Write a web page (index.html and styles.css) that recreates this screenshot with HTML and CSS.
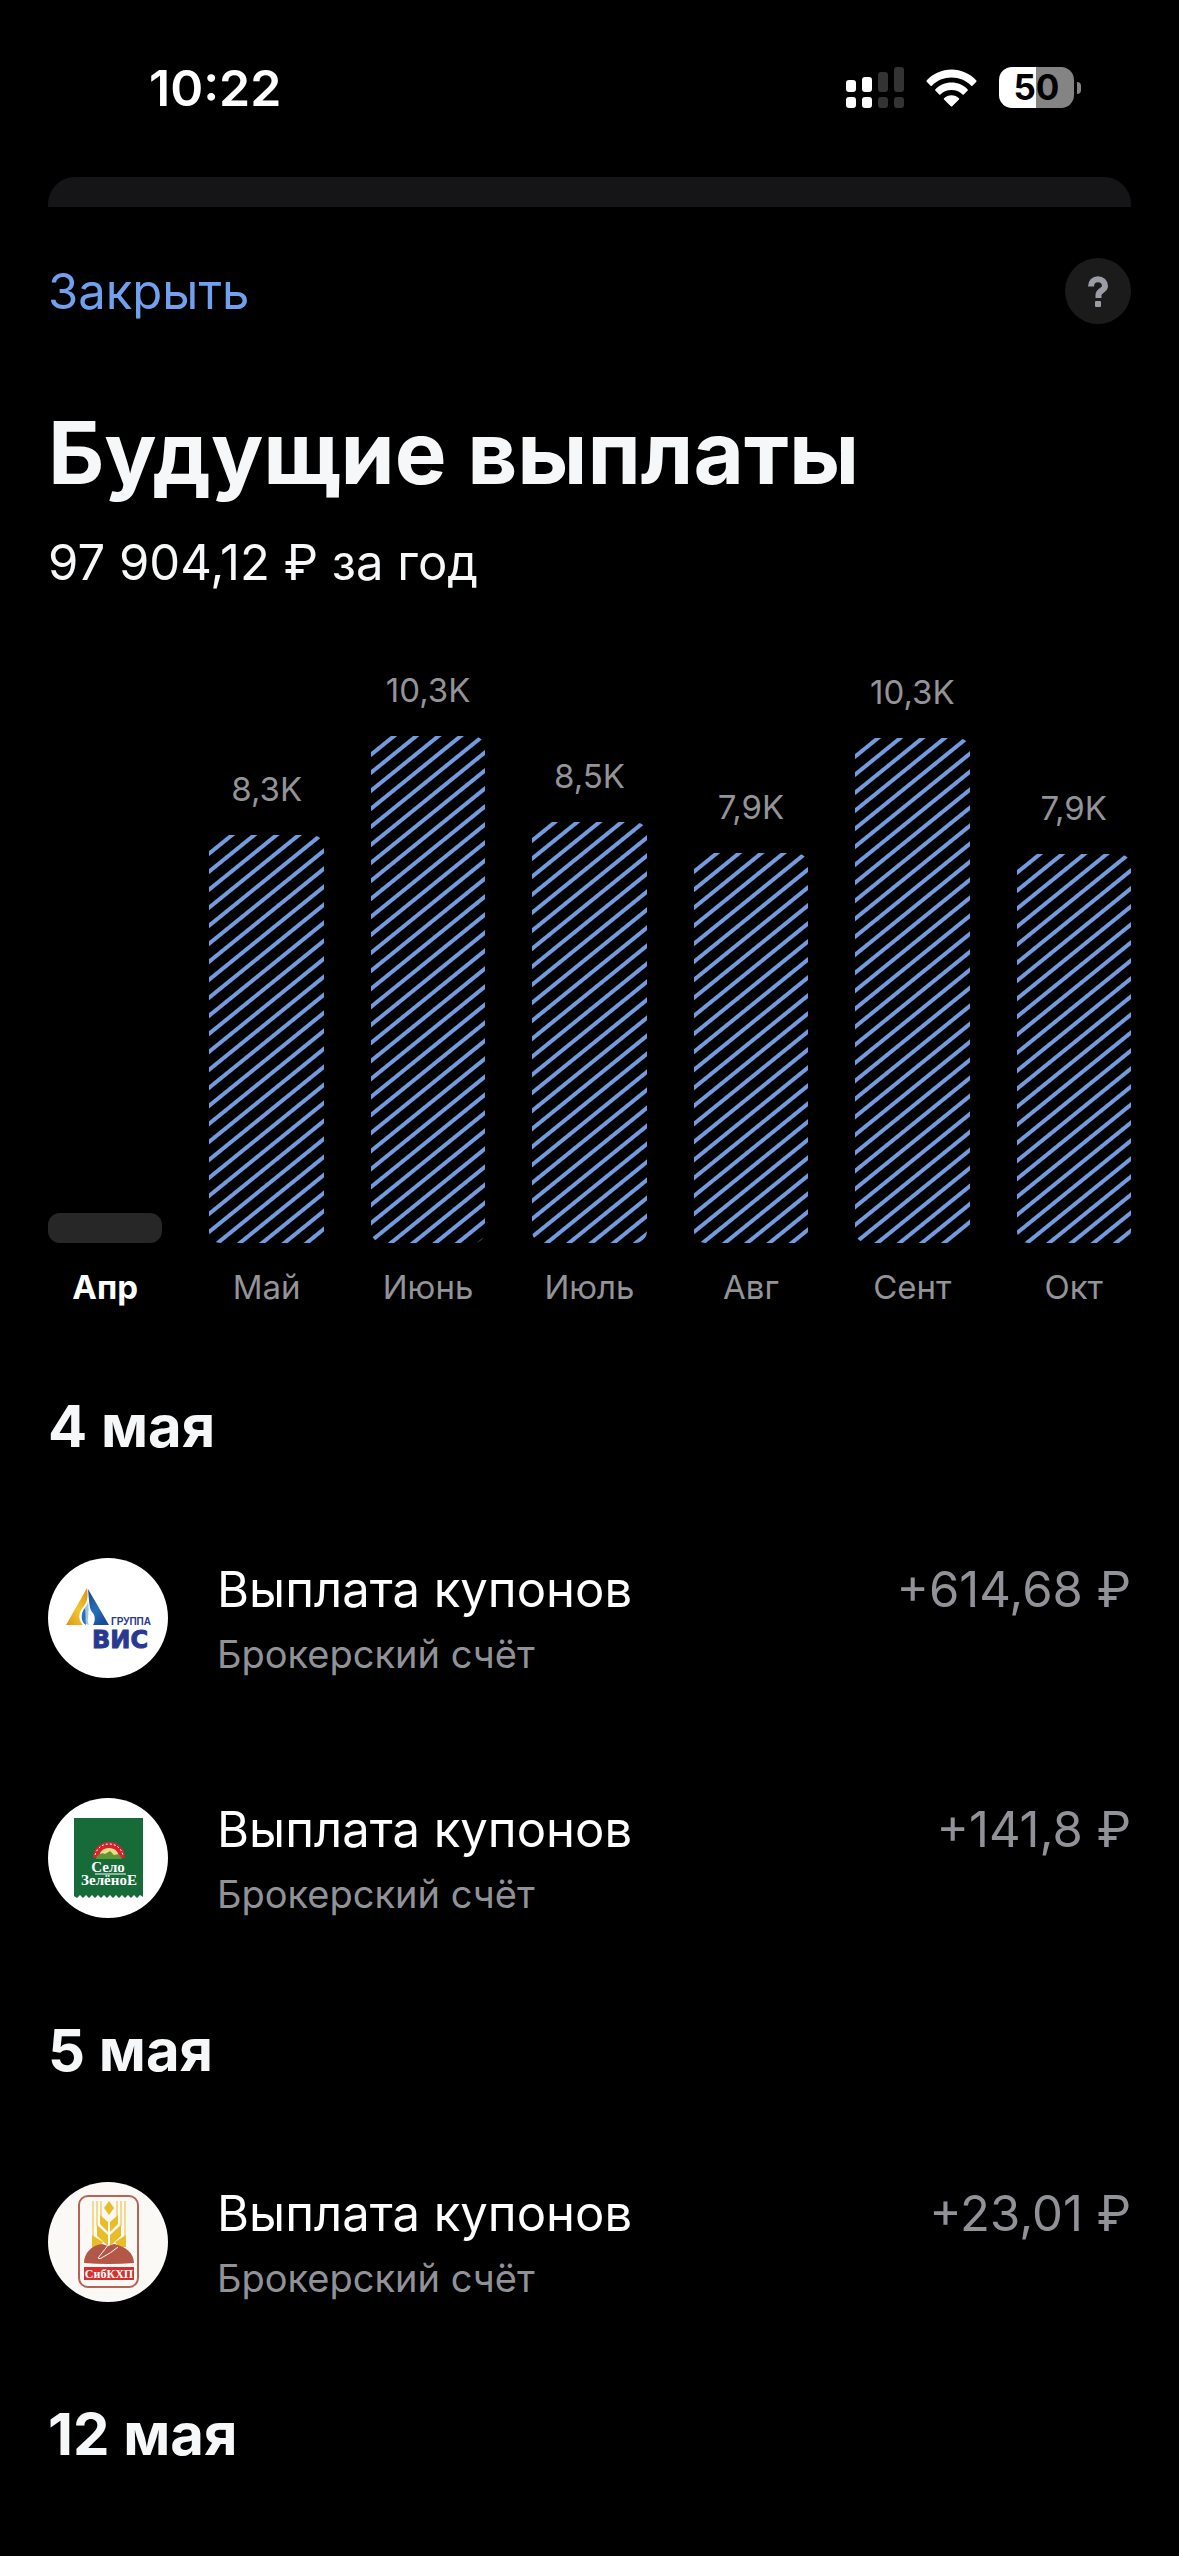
FILE: index.html
```html
<!DOCTYPE html>
<html lang="ru">
<head>
<meta charset="UTF-8" />
<meta name="viewport" content="width=device-width, initial-scale=1" />
<title>Будущие выплаты</title>
<link rel="stylesheet" href="styles.css">
</head>
<body>
<div class="status-bar">
  <time class="clock">10:22</time>
  <div class="status-icons">
    <svg class="signal" viewBox="0 0 58 41" aria-hidden="true">
      <g fill="#fff">
        <rect x="0" y="13" width="10" height="12" rx="3" />
        <rect x="0" y="30" width="10" height="11" rx="3" />
        <rect x="16" y="10" width="10" height="15" rx="3" />
        <rect x="16" y="30" width="10" height="11" rx="3" />
      </g>
      <g fill="#333">
        <rect x="32" y="5" width="10" height="20" rx="3" />
        <rect x="32" y="30" width="10" height="11" rx="3" />
        <rect x="48" y="0" width="10" height="25" rx="3" />
        <rect x="48" y="30" width="10" height="11" rx="3" />
      </g>
    </svg>
    <svg class="wifi" viewBox="0 0 51 38" aria-hidden="true">
      <g fill="#fff">
        <path d="M0.6 11.6C7 4.600 16 0.600 25.500 0.600S44 4.600 50.400 11.600Q50.800 12.200 50.300 12.800L46.400 16.700Q45.800 17.200 45.200 16.700C40 11.500 33 8.600 25.500 8.600S11 11.500 5.800 16.700Q5.200 17.200 4.600 16.700L0.700 12.800Q0.200 12.200 0.600 11.600Z" />
        <path d="M9.300 20.400C13.600 16 19.300 13.600 25.500 13.600S37.400 16 41.700 20.400Q42.200 21 41.700 21.600L37.800 25.400Q37.200 26 36.600 25.400C33.600 22.600 29.700 21.100 25.500 21.100S17.400 22.600 14.400 25.400Q13.800 26 13.200 25.400L9.300 21.600Q8.800 21 9.300 20.400Z" />
        <path d="M18 29.200C20.100 27.300 22.700 26.300 25.500 26.300S30.900 27.300 33 29.200Q33.600 29.800 33 30.400L26.200 37.200Q25.500 37.900 24.800 37.200L18 30.400Q17.400 29.800 18 29.200Z" />
      </g>
    </svg>
    <div class="battery"><span class="battery-level">50</span></div>
  </div>
</div>

<div class="back-card"></div>

<main class="sheet">
  <header class="sheet-nav">
    <button type="button" class="close-btn">Закрыть</button>
    <button type="button" class="help-btn" aria-label="Справка">
      <svg viewBox="0 0 20 31" aria-hidden="true">
        <path d="M3 10.500C3 6 6 3.200 10 3.200S17 6 17 10C17 14.500 10.500 14.500 10.500 19V22" fill="none" stroke="#9b9ca6" stroke-width="6" />
        <rect x="7" y="25" width="6" height="6" rx="1" fill="#9b9ca6" />
      </svg>
    </button>
  </header>

  <h1>Будущие выплаты</h1>
  <p class="total">97 904,12 ₽ за год</p>

  <div class="chart">
    <div class="month current">
      <div class="bar empty" style="height: 30px"></div>
      <span class="name">Апр</span>
    </div>
    <div class="month">
      <span class="value">8,3K</span>
      <div class="bar" style="height: 408px"></div>
      <span class="name">Май</span>
    </div>
    <div class="month">
      <span class="value">10,3K</span>
      <div class="bar" style="height: 507px"></div>
      <span class="name">Июнь</span>
    </div>
    <div class="month">
      <span class="value">8,5K</span>
      <div class="bar" style="height: 421px"></div>
      <span class="name">Июль</span>
    </div>
    <div class="month">
      <span class="value">7,9K</span>
      <div class="bar" style="height: 390px"></div>
      <span class="name">Авг</span>
    </div>
    <div class="month">
      <span class="value">10,3K</span>
      <div class="bar" style="height: 505px"></div>
      <span class="name">Сент</span>
    </div>
    <div class="month">
      <span class="value">7,9K</span>
      <div class="bar" style="height: 389px"></div>
      <span class="name">Окт</span>
    </div>
  </div>

  <section>
    <h2>4 мая</h2>
    <ul class="payments">
      <li class="payment">
        <svg class="logo" viewBox="0 0 120 120" aria-hidden="true">
          <defs>
            <linearGradient id="visGold" x1="0" y1="1" x2="1" y2="0">
              <stop offset="0" stop-color="#d9951c" />
              <stop offset="0.5" stop-color="#f6c62c" />
              <stop offset="1" stop-color="#d8901a" />
            </linearGradient>
            <linearGradient id="visBlue" x1="0" y1="0" x2="0.6" y2="1">
              <stop offset="0" stop-color="#1d3f8f" />
              <stop offset="0.6" stop-color="#2471b8" />
              <stop offset="1" stop-color="#1b4b98" />
            </linearGradient>
          </defs>
          <circle cx="60" cy="60" r="60" fill="#fff" />
          <path d="M39 30L18 67H35C29 60 31 54 36 48C40 43 40 37 39 30Z" fill="url(#visGold)" />
          <path d="M40 31L61 67H45C48 62 47 57 44 54C41 50 41 41 40 31Z" fill="url(#visBlue)" />
          <path d="M40 43C40 48 34 51 34 58C34 63 37 66 41 67C38 62 42 57 40 43Z" fill="#9fc4e6" />
          <path d="M37 50C32 56 33 64 38 67C37 61 38 56 37 50Z" fill="#2b6fb5" />
          <text x="83" y="67" class="vis-small">ГРУППА</text>
          <text x="72" y="90" class="vis-big">ВИС</text>
        </svg>
        <div class="info">
          <span class="title">Выплата купонов</span>
          <span class="account">Брокерский счёт</span>
        </div>
        <span class="amount">+614,68 ₽</span>
      </li>
      <li class="payment">
        <svg class="logo" viewBox="0 0 120 120" aria-hidden="true">
          <circle cx="60" cy="60" r="60" fill="#fff" />
          <path d="M26 20H95V99L92 97L89 100L86 97L83 100L80 97L77 100L74 97L71 100L68 97L65 100L62 97L59 100L56 97L53 100L50 97L47 100L44 97L41 100L38 97L35 100L32 97L29 100L26 98Z" fill="#176b38" />
          <path d="M45 60C45 50 52 44 61 44S77 50 77 60Z" fill="#d3242f" />
          <path d="M47 57C49 50 54 46 61 46S73 50 75 57" fill="none" stroke="#fff" stroke-width="1" stroke-dasharray="2 2" />
          <path d="M51 60C51 54 55 50 61 50S71 54 71 60Z" fill="#f3dd84" />
          <path d="M49 58Q53 54 57 56L62 53L66 57L71 56L74 61H48Z" fill="#5d9636" />
          <text x="60" y="74" class="selo">Село</text>
          <path d="M47 76H78" stroke="#fff" stroke-width="1" />
          <text x="61" y="87" class="selo">ЗелёноЕ</text>
        </svg>
        <div class="info">
          <span class="title">Выплата купонов</span>
          <span class="account">Брокерский счёт</span>
        </div>
        <span class="amount">+141,8 ₽</span>
      </li>
    </ul>
  </section>

  <section>
    <h2>5 мая</h2>
    <ul class="payments">
      <li class="payment">
        <svg class="logo" viewBox="0 0 120 120" aria-hidden="true">
          <circle cx="60" cy="60" r="60" fill="#fbf9f6" />
          <rect x="31" y="14" width="59" height="91" rx="9" fill="none" stroke="#b66355" stroke-width="2" />
          <g fill="#e9bd27">
            <path d="M61 19L66 26L61 33L56 26Z" />
            <path d="M52 33L60 40V50L52 42Z" />
            <path d="M70 33L62 40V50L70 42Z" />
            <path d="M49 43L60 53V64L49 54Z" />
            <path d="M73 43L62 53V64L73 54Z" />
            <path d="M44 53L55 60L51 65H44Z" />
            <path d="M78 53L67 60L71 65H78Z" />
          </g>
          <path d="M45 19V56M49 19V44M53 19V36M69 19V36M73 19V44M77 19V56" stroke="#e9bd27" stroke-width="1" />
          <path d="M36 81C36 71 44 63 54 62L60 64L66 62C77 64 86 71 86 81Q61 83 36 81Z" fill="#b35747" />
          <path d="M61 62L50 76Q52 78 55 75Q63 71 70 65" fill="none" stroke="#fbf9f6" stroke-width="1" />
          <rect x="36" y="85" width="50" height="13" fill="#d8302f" />
          <text x="61" y="96" class="sib">СибКХП</text>
        </svg>
        <div class="info">
          <span class="title">Выплата купонов</span>
          <span class="account">Брокерский счёт</span>
        </div>
        <span class="amount">+23,01 ₽</span>
      </li>
    </ul>
  </section>

  <section>
    <h2>12 мая</h2>
  </section>
</main>
</body>
</html>
```

FILE: styles.css
```css
* {
  box-sizing: border-box;
}
body {
  margin: 0;
  background: #000;
  color: #f6f7f8;
  font-family: Inter, "Liberation Sans", sans-serif;
  font-size: 49px;
}
h1, h2, p, ul {
  margin: 0;
  padding: 0;
}
button {
  border: none;
  padding: 0;
  background: none;
  font: inherit;
  cursor: pointer;
}

/* status bar */
.status-bar {
  display: flex;
  justify-content: space-between;
  align-items: center;
  height: 177px;
  padding: 0 98px 2px 149px;
}
.clock {
  color: #fff;
  font-size: 50px;
  font-weight: 600;
}
.status-icons {
  display: flex;
  align-items: center;
  gap: 22px;
}
.signal {
  width: 58px;
  height: 41px;
}
.wifi {
  width: 51px;
  height: 38px;
}
.battery {
  display: flex;
  align-items: center;
  gap: 3px;
}
.battery-level {
  width: 75px;
  height: 41px;
  border-radius: 13px;
  background: linear-gradient(90deg, #fff 50%, #848484 50%);
  color: #000;
  font-size: 35px;
  font-weight: 700;
  line-height: 41px;
  text-align: center;
}
.battery::after {
  content: "";
  width: 4px;
  height: 12px;
  border-radius: 0 4px 4px 0;
  background: #848484;
}

/* edge of the card lying under the sheet */
.back-card {
  height: 30px;
  margin: 0 48px;
  border-radius: 27px 27px 0 0;
  background: #151517;
}

.sheet {
  padding: 51px 48px 0;
}
.sheet-nav {
  display: flex;
  justify-content: space-between;
  align-items: center;
}
.close-btn {
  color: #70a0ee;
}
.help-btn {
  display: flex;
  align-items: center;
  justify-content: center;
  width: 66px;
  height: 66px;
  border-radius: 50%;
  background: #1b1b1b;
}
.help-btn svg {
  width: 20px;
  height: 31px;
}
h1 {
  margin-top: 76px;
  font-size: 87px;
  font-weight: 700;
  line-height: 106px;
}
.total {
  margin-top: 27px;
  line-height: 60px;
}

/* chart */
.chart {
  display: flex;
  align-items: flex-end;
  gap: 47px;
  margin-top: 77px;
  color: #939398;
  font-size: 33px;
  line-height: 40px;
}
.month {
  display: flex;
  flex: 1 1 0;
  flex-direction: column;
  align-items: center;
  min-width: 0;
}
.value {
  margin-bottom: 26px;
}
.bar {
  width: 100%;
  border-radius: 12px;
  background: repeating-linear-gradient(141deg, #729be0 0, #729be0 2px, transparent 3px, transparent 12px, #729be0 13px, #729be0 14px);
}
.bar.empty {
  background: #272727;
}
.name {
  margin-top: 24px;
}
.current .name {
  color: #fff;
  font-weight: 700;
}

/* payments */
.chart + section {
  margin-top: 47px;
}
h2 {
  font-size: 58px;
  font-weight: 700;
  line-height: 144px;
}
.payments {
  list-style: none;
}
.payment {
  display: flex;
  align-items: center;
  height: 240px;
}
.logo {
  width: 120px;
  height: 120px;
  margin-right: 49px;
}
.info {
  display: flex;
  flex: 1;
  flex-direction: column;
  gap: 4px;
  padding-top: 7px;
}
.title {
  color: #fff;
  line-height: 60px;
}
.account {
  color: #919298;
  font-size: 38px;
  line-height: 60px;
}
.amount {
  align-self: flex-start;
  margin-top: 62px;
  color: #919298;
  line-height: 60px;
}

/* lettering inside the company logos */
.vis-small {
  fill: #2a3990;
  font: 700 10px "Liberation Sans", sans-serif;
  text-anchor: middle;
}
.vis-big {
  fill: #2a3990;
  stroke: #2a3990;
  stroke-width: 1px;
  font: 700 24px "DejaVu Sans", sans-serif;
  text-anchor: middle;
}
.selo {
  fill: #fff;
  font: 700 15px "Liberation Serif", serif;
  text-anchor: middle;
}
.sib {
  fill: #fff;
  font: 700 12px "Liberation Serif", serif;
  text-anchor: middle;
}
```
